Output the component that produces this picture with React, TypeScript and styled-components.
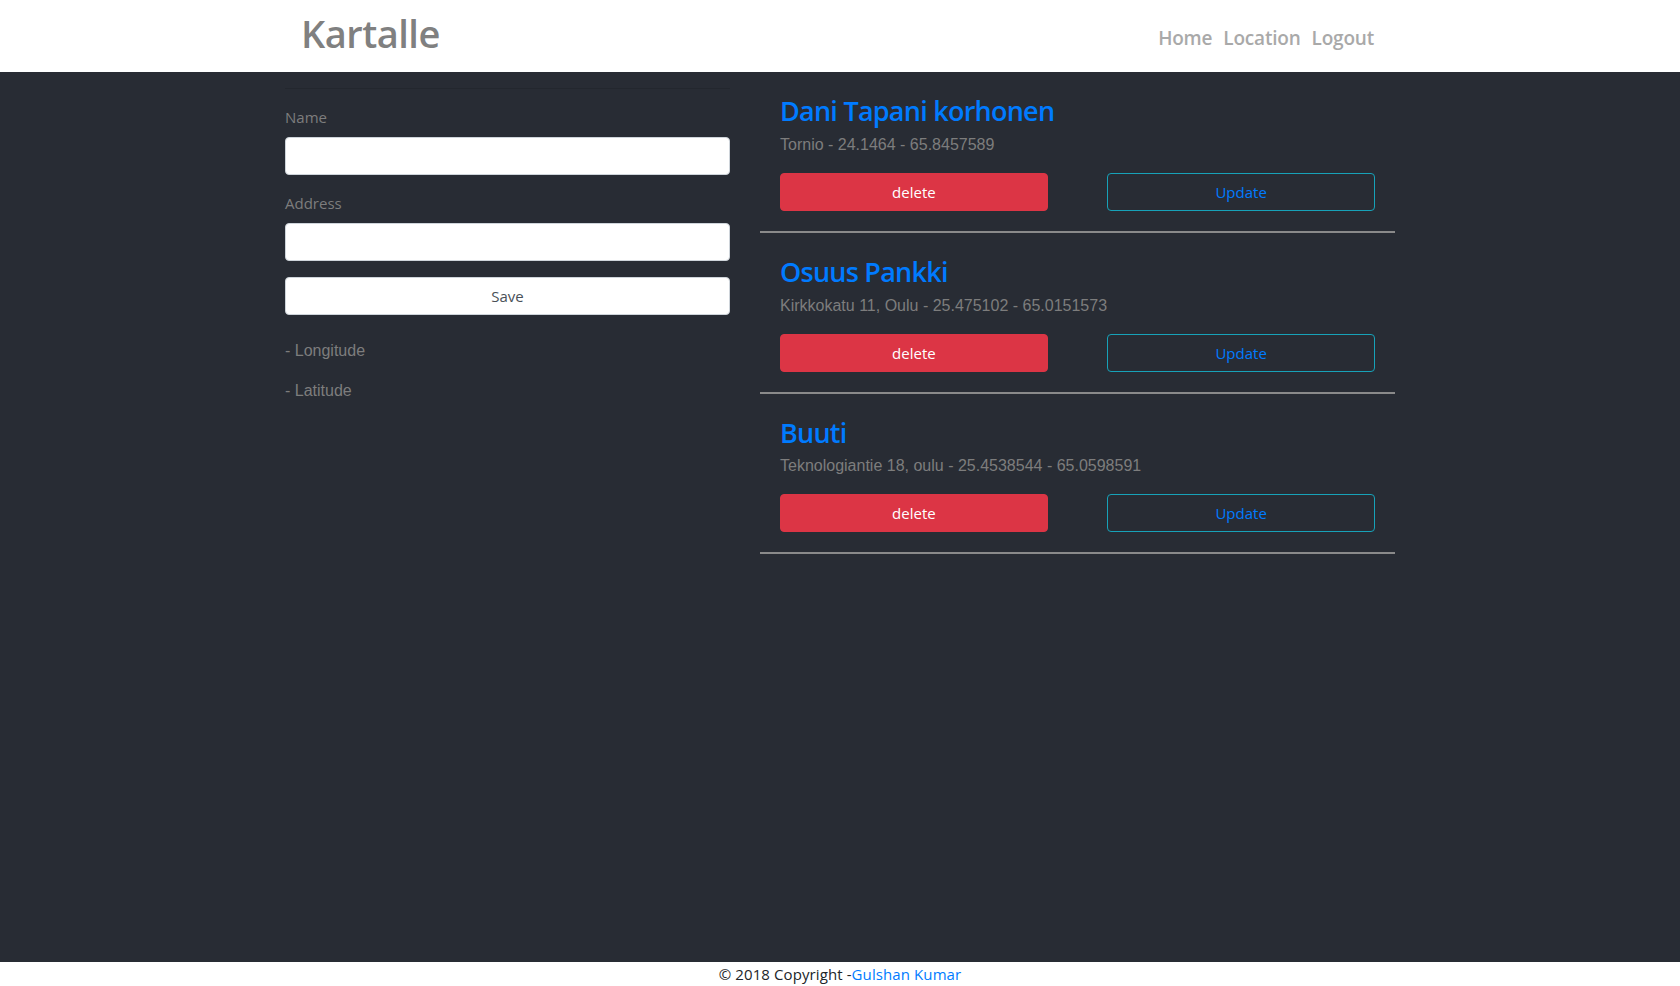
import styled, { createGlobalStyle } from 'styled-components'

interface ILocation {
  id: number
  name: string
  address: string
  longitude: string
  latitude: string
}

const locations: ILocation[] = [
  { id: 1, name: 'Dani Tapani korhonen', address: 'Tornio', longitude: '24.1464', latitude: '65.8457589' },
  { id: 2, name: 'Osuus Pankki', address: 'Kirkkokatu 11, Oulu', longitude: '25.475102', latitude: '65.0151573' },
  { id: 3, name: 'Buuti', address: 'Teknologiantie 18, oulu', longitude: '25.4538544', latitude: '65.0598591' },
]

const sysFont = `"Open Sans", "Noto Sans", "Liberation Sans", sans-serif`
const arialFont = `"Liberation Sans", Arial, sans-serif`

const GlobalStyle = createGlobalStyle`
  * {
    box-sizing: border-box;
  }
  html, body {
    margin: 0;
    padding: 0;
  }
  body {
    font-family: ${sysFont};
    font-size: 16px;
    line-height: 1.5;
    color: #212529;
    background: #fff;
  }
`

const App = () => {
  return <Page>
    <GlobalStyle />
    <Header>
      <HeaderInner>
        <Brand>Kartalle</Brand>
        <Nav>
          <NavLink href="#">Home</NavLink>
          <NavLink href="#">Location</NavLink>
          <NavLink href="#">Logout</NavLink>
        </Nav>
      </HeaderInner>
    </Header>
    <Main>
      <Container>
        <FormCol>
          <FaintRule />
          <FormGroup>
            <Label>Name</Label>
            <Input type="text" />
          </FormGroup>
          <FormGroup>
            <Label>Address</Label>
            <Input type="text" />
          </FormGroup>
          <SaveButton>Save</SaveButton>
          <Coord>- Longitude</Coord>
          <Coord>- Latitude</Coord>
        </FormCol>
        <ListCol>
          {locations.map((loc) => (
            <Item key={loc.id}>
              <ItemBody>
                <ItemTitle>{loc.name}</ItemTitle>
                <ItemInfo>{loc.address} - {loc.longitude} - {loc.latitude}</ItemInfo>
                <Actions>
                  <ActionButton variant="danger">delete</ActionButton>
                  <ActionButton variant="info">Update</ActionButton>
                </Actions>
              </ItemBody>
              <ItemRule />
            </Item>
          ))}
        </ListCol>
      </Container>
    </Main>
    <Footer>
      © 2018 Copyright -<FooterLink href="#">Gulshan Kumar</FooterLink>
    </Footer>
  </Page>
}

const Page = styled.div`
  display: flex;
  flex-direction: column;
  min-height: 100vh;
`

const Header = styled.header`
  height: 72px;
  background: #fff;
`

const HeaderInner = styled.div`
  max-width: 1140px;
  height: 100%;
  margin: 0 auto;
  padding: 0 36px 0 31px;
  display: flex;
  align-items: center;
  justify-content: space-between;
`

const Brand = styled.h1`
  margin: -5px 0 0;
  font-size: 38px;
  font-weight: 600;
  line-height: 1.2;
  letter-spacing: -0.5px;
  color: #808080;
`

const Nav = styled.nav`
  display: flex;
  gap: 11px;
  margin-top: 4px;
`

const NavLink = styled.a`
  font-size: 19px;
  font-weight: 600;
  color: #a9a9a9;
  text-decoration: none;
  letter-spacing: -0.2px;
`

const Main = styled.main`
  flex: 1;
  background: #282c34;
`

const Container = styled.div`
  max-width: 1140px;
  margin: 0 auto;
  display: grid;
  grid-template-columns: 5fr 7fr;
`

const FormCol = styled.section`
  padding: 0 15px;
`

const FaintRule = styled.hr`
  margin: 16px 0;
  border: 0;
  border-top: 1px solid rgba(0, 0, 0, 0.1);
`

const FormGroup = styled.div`
  margin-bottom: 16px;
`

const Label = styled.label`
  display: inline-block;
  margin-bottom: 8px;
  font-size: 15px;
  line-height: 24px;
  color: #7d7d7d;
`

const Input = styled.input`
  display: block;
  width: 100%;
  height: 38px;
  padding: 6px 12px;
  font-family: ${sysFont};
  font-size: 16px;
  color: #495057;
  background: #fff;
  border: 1px solid #ced4da;
  border-radius: 4px;
`

const SaveButton = styled.button`
  display: block;
  width: 100%;
  height: 38px;
  margin-bottom: 24px;
  font-family: ${sysFont};
  font-size: 15px;
  color: #495057;
  background: #fff;
  border: 1px solid #ced4da;
  border-radius: 4px;
`

const Coord = styled.p`
  margin: 0 0 16px;
  font-family: ${arialFont};
  font-size: 16px;
  color: #7d7d7d;
`

const ListCol = styled.section`
  padding: 0 15px;
`

const Item = styled.article``

const ItemBody = styled.div`
  padding: 19px 20px 0;
`

const ItemTitle = styled.h3`
  margin: 3px 0 5px;
  font-size: 27px;
  font-weight: 600;
  line-height: 1.25;
  letter-spacing: -0.75px;
  color: #007bff;
`

const ItemInfo = styled.p`
  margin: 0 0 16px;
  font-family: ${arialFont};
  font-size: 16px;
  color: #7d7d7d;
`

const Actions = styled.div`
  display: flex;
  justify-content: space-between;
`

const ActionButton = styled.button<{ variant: 'danger' | 'info' }>`
  width: 45%;
  height: 38px;
  font-family: ${sysFont};
  font-size: 15px;
  border-radius: 4px;
  color: ${(p) => (p.variant === 'danger' ? '#fff' : '#007bff')};
  background: ${(p) => (p.variant === 'danger' ? '#dc3545' : 'transparent')};
  border: 1px solid ${(p) => (p.variant === 'danger' ? '#dc3545' : '#17a2b8')};
`

const ItemRule = styled.hr`
  margin: 20px 0 0;
  border: 0;
  border-top: 2px solid #8a8a8a;
`

const Footer = styled.footer`
  height: 24px;
  background: #fff;
  text-align: center;
  font-size: 15px;
  line-height: 24px;
  letter-spacing: 0.1px;
  color: #212529;
`

const FooterLink = styled.a`
  color: #007bff;
  text-decoration: none;
`

export default App
